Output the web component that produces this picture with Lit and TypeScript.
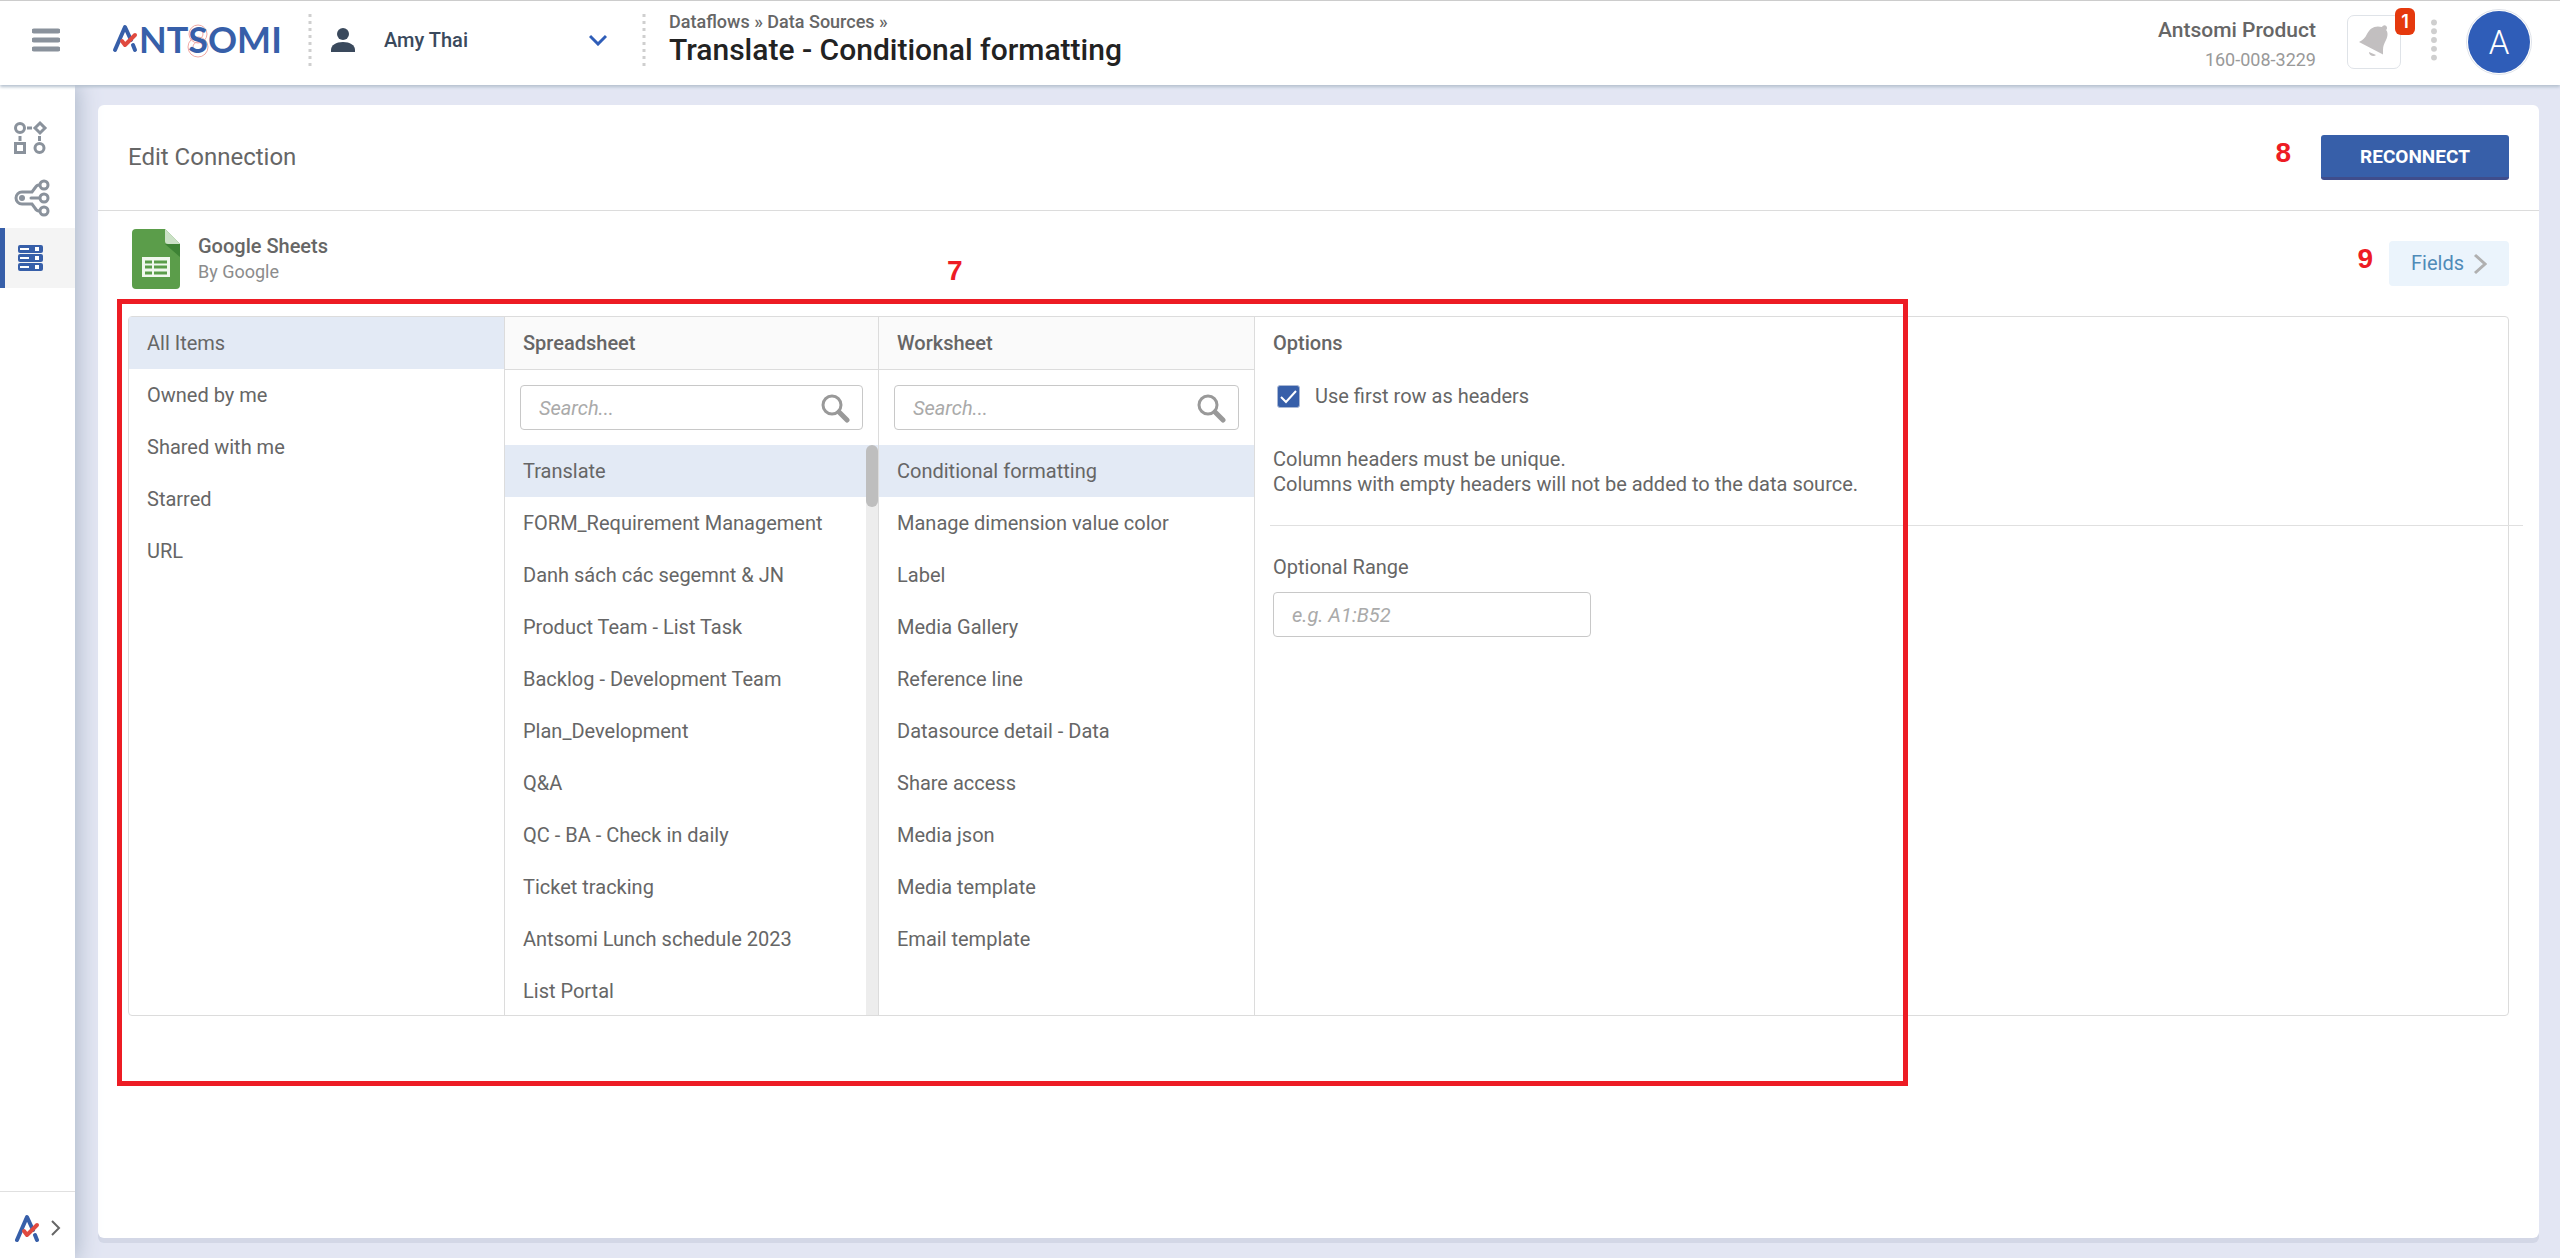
import { LitElement, html, svg, css } from "lit";
import { customElement, state } from "lit/decorators.js";
import { classMap } from "lit/directives/class-map.js";

const SCOPES = ["All Items", "Owned by me", "Shared with me", "Starred", "URL"];

const SPREADSHEETS = [
  "Translate",
  "FORM_Requirement Management",
  "Danh sách các segemnt & JN",
  "Product Team - List Task",
  "Backlog - Development Team",
  "Plan_Development",
  "Q&A",
  "QC - BA - Check in daily",
  "Ticket tracking",
  "Antsomi Lunch schedule 2023",
  "List Portal",
];

const WORKSHEETS = [
  "Conditional formatting",
  "Manage dimension value color",
  "Label",
  "Media Gallery",
  "Reference line",
  "Datasource detail - Data",
  "Share access",
  "Media json",
  "Media template",
  "Email template",
];

const base = css`
  * {
    box-sizing: border-box;
  }
  button,
  input {
    font: inherit;
    color: inherit;
    margin: 0;
  }
  button {
    border: 0;
    padding: 0;
    background: none;
    cursor: pointer;
  }
  a {
    color: inherit;
    text-decoration: none;
  }
  svg {
    display: block;
    flex: none;
  }
  ul {
    list-style: none;
    margin: 0;
    padding: 0;
  }
`;

/* Antsomi mark: blue A with a red tick for its crossbar. */
const mark = svg`
  <g fill="none" stroke-width="4" stroke-linecap="round" stroke-linejoin="round">
    <path stroke="#375fa9" d="M2 26 12 3 18 16M20 21l2 5" />
    <path stroke="#e04a3f" d="M9 17l3 4L22 11" />
  </g>`;

@customElement("app-header")
class AppHeader extends LitElement {
  static styles = [
    base,
    css`
      :host {
        display: flex;
        align-items: stretch;
        height: 85px;
        border-top: 1px solid #cccccc;
        background: #ffffff;
        box-shadow: 0 2px 3px #b4c0ce;
        position: relative;
        z-index: 2;
      }
      .menu {
        width: 92px;
        padding-left: 32px;
        padding-bottom: 6px;
      }
      .logo {
        display: flex;
        align-items: center;
        padding: 0 18px 4px 20px;
      }
      .dots {
        width: 5px;
        height: 56px;
        margin-top: 12px;
        flex: none;
      }
      .account {
        display: flex;
        align-items: center;
        width: 329px;
        padding: 0 35px 6px 17px;
        font-size: 20px;
        font-weight: 500;
        color: #3a495c;
      }
      .account .name {
        flex: 1;
        text-align: left;
        padding-left: 28px;
      }
      .heading {
        flex: 1;
        padding: 10px 0 0 22px;
      }
      .crumbs {
        font-size: 18px;
        line-height: 22px;
        font-weight: 500;
        color: #666666;
      }
      h1 {
        margin: 0;
        font-size: 30px;
        line-height: 34px;
        font-weight: 500;
        color: #222222;
      }
      .portal {
        text-align: right;
        padding: 16px 31px 0 0;
      }
      .portal .title {
        font-size: 21px;
        line-height: 26px;
        font-weight: 500;
        color: #666666;
      }
      .portal .id {
        font-size: 18px;
        line-height: 34px;
        color: #999999;
      }
      .bell {
        position: relative;
        width: 54px;
        height: 54px;
        margin-top: 14px;
        border: 1px solid #dfe3e8;
        border-radius: 7px;
      }
      .badge {
        position: absolute;
        top: -8px;
        right: -15px;
        width: 20px;
        height: 27px;
        border-radius: 6px;
        background: #e5390d;
        color: #ffffff;
        font: 600 18px/27px Inter, sans-serif;
        text-align: center;
      }
      .more {
        padding: 0 0 2px 30px;
      }
      .avatar {
        width: 66px;
        height: 66px;
        margin: 8px 28px 0 29px;
        border: 1px solid #dfe3ea;
        border-radius: 50%;
        background: #2f5db8;
        background-clip: content-box;
        padding: 1px;
        font-size: 33px;
        font-weight: 300;
        color: #ffffff;
      }
    `,
  ];

  private separator() {
    return html`<svg class="dots" viewBox="0 0 5 56" aria-hidden="true">
      <path d="M2 1v56" stroke="#cfcfcf" stroke-width="3" stroke-dasharray="3 4" fill="none" />
    </svg>`;
  }

  render() {
    return html`
      <button class="menu" aria-label="Menu">
        <svg width="28" height="24" viewBox="0 0 28 24">
          <path d="M2 3h24M2 12h24M2 21h24" stroke="#8a929c" stroke-width="5" stroke-linecap="round" />
        </svg>
      </button>
      <a class="logo" href="#">
        <svg width="178" height="48" viewBox="0 -4 178 48">
          <g transform="translate(1 3)">${mark}</g>
          <g fill="none" stroke="#f0aaa5" stroke-width="1">
            <circle cx="86" cy="13" r="9" />
            <circle cx="86" cy="26" r="10" />
            <circle cx="86" cy="13" r="5" />
            <circle cx="86" cy="26" r="5" />
          </g>
          <text x="27" y="32" font-family="Lato, sans-serif" font-size="36" font-weight="700" fill="#375fa9">NTSOMI</text>
        </svg>
      </a>
      ${this.separator()}
      <button class="account">
        <svg width="26" height="26" viewBox="0 0 26 26" fill="#3a495c">
          <ellipse cx="13" cy="7" rx="6" ry="6" />
          <path d="M1 25v-2c0-5 5-8 12-8s12 3 12 8v2z" />
        </svg>
        <span class="name">Amy Thai</span>
        <svg width="18" height="12" viewBox="0 0 18 12">
          <path d="M1 2l8 8 8-8" fill="none" stroke="#2f5db8" stroke-width="3" />
        </svg>
      </button>
      ${this.separator()}
      <div class="heading">
        <nav class="crumbs"><a href="#">Dataflows</a> » <a href="#">Data Sources</a> »</nav>
        <h1>Translate - Conditional formatting</h1>
      </div>
      <div class="portal">
        <div class="title">Antsomi Product</div>
        <div class="id">160-008-3229</div>
      </div>
      <button class="bell" aria-label="Notifications">
        <svg width="52" height="52" viewBox="0 0 52 52" fill="#c2bfc0">
          <path d="M11 26c4-2 6-4 8-8 3-6 8-9 15-7a2.600 2.600 0 1 1 4 3c2 2 2 6 0 10-2 4-3 6-3 10 0 2 0 3 0 4.500z" />
          <path d="M21 36l7 3c-2 2-7 1-7-3z" />
        </svg>
        <span class="badge">1</span>
      </button>
      <svg class="more" width="36" height="84" viewBox="0 0 6 84" fill="#cfcfcf" aria-hidden="true">
        ${[22, 31, 40, 49, 58].map((y) => svg`<circle cx="3" cy=${y} r="3" />`)}
      </svg>
      <button class="avatar">A</button>
    `;
  }
}

@customElement("app-sidebar")
class AppSidebar extends LitElement {
  static styles = [
    base,
    css`
      :host {
        display: flex;
        flex-direction: column;
        justify-content: space-between;
        width: 75px;
        background: #ffffff;
        box-shadow: 0 0 22px 2px #a9b5c6;
        position: relative;
        z-index: 1;
      }
      nav {
        display: flex;
        flex-direction: column;
        padding-top: 23px;
      }
      .item {
        display: flex;
        align-items: center;
        height: 60px;
        padding-left: 13px;
      }
      .active {
        border-left: 5px solid #375fa9;
        background: #f4f4f4;
      }
      .expand {
        display: flex;
        align-items: center;
        justify-content: space-between;
        height: 67px;
        padding: 6px 14px 0 15px;
        border-top: 1px solid #e0e0e0;
      }
    `,
  ];

  render() {
    return html`
      <nav>
        <a class="item" href="#" aria-label="Journeys">
          <svg width="36" height="36" viewBox="13 120 36 36" fill="none" stroke="#8a929c" stroke-width="3">
            <circle cx="20" cy="128" r="4.500" />
            <path d="M40 123l5 5-5 5-5-5z" />
            <path d="M15.500 143.500h9v9h-9z" />
            <circle cx="39.500" cy="148" r="4.500" />
            <path d="M27 128h5M20 136v5M39.500 136v5" />
          </svg>
        </a>
        <a class="item" href="#" aria-label="Integrations">
          <svg width="38" height="38" viewBox="12 179 38 38" fill="none" stroke="#8a929c" stroke-width="3">
            <path d="M38 185c-2 0-3 1-4 3l-3 4H21a6 6 0 0 0 0 12h10l3 4c1 2 2 3 4 3" />
            <path d="M30 198h8" stroke-linecap="round" />
            <circle cx="43" cy="185" r="4" />
            <circle cx="43" cy="198" r="4" />
            <circle cx="43" cy="211" r="4" />
            <circle cx="21" cy="198" r="3" fill="#8a929c" stroke="none" />
          </svg>
        </a>
        <a class="item active" href="#" aria-label="Data sources">
          <svg width="25" height="28" viewBox="0 0 25 28">
            ${[1, 10, 19].map(
              (y) => svg`
                <rect x="0" y=${y} width="25" height="8" rx="2" fill="#375fa9" />
                <path d=${`M2 ${y + 4}h9`} stroke="#fff" stroke-width="2" />
                <rect x="17" y=${y + 2} width="4" height="4" fill="#fff" />`
            )}
          </svg>
        </a>
      </nav>
      <button class="expand" aria-label="Expand">
        <svg width="25" height="28" viewBox="0 0 25 28">${mark}</svg>
        <svg width="10" height="16" viewBox="0 0 10 16">
          <path d="M1 1l7 7-7 7" fill="none" stroke="#666666" stroke-width="2" />
        </svg>
      </button>
    `;
  }
}

@customElement("item-list")
class ItemList extends LitElement {
  static properties = {
    items: { attribute: false },
    selected: { type: Number },
  };
  declare items: string[];
  declare selected: number;

  static styles = [
    base,
    css`
      :host {
        display: block;
        flex: 1;
        min-width: 0;
      }
      .item {
        width: 100%;
        height: 52px;
        padding: 0 18px;
        text-align: left;
      }
      .selected {
        background: #e3eaf5;
      }
    `,
  ];

  constructor() {
    super();
    this.items = [];
    this.selected = 0;
  }

  render() {
    return html`<ul>
      ${this.items.map(
        (item, i) => html`<li>
          <button
            class=${classMap({ item: true, selected: i === this.selected })}
            @click=${() => (this.selected = i)}
          >${item}</button>
        </li>`
      )}
    </ul>`;
  }
}

@customElement("search-box")
class SearchBox extends LitElement {
  static properties = { label: { type: String } };
  declare label: string;

  static styles = [
    base,
    css`
      :host {
        display: flex;
        align-items: center;
        height: 45px;
        margin: 15px;
        padding: 0 12px 0 0;
        border: 1px solid #c8c8c8;
        border-radius: 4px;
      }
      input {
        flex: 1;
        min-width: 0;
        height: 100%;
        padding: 0 18px;
        border: 0;
        outline: 0;
        background: none;
      }
      input::placeholder {
        font-style: italic;
        color: #aaaaaa;
      }
    `,
  ];

  render() {
    return html`
      <input type="text" placeholder="Search..." aria-label=${this.label} />
      <svg width="30" height="30" viewBox="0 0 30 30" fill="none" stroke="#999999">
        <circle cx="12" cy="12" r="9" stroke-width="3" />
        <path d="M19 19l8 8" stroke-width="5" stroke-linecap="round" />
      </svg>
    `;
  }
}

@customElement("app-root")
class AppRoot extends LitElement {
  @state() private firstRowHeaders = true;

  static styles = [
    base,
    css`
      :host {
        display: flex;
        flex-direction: column;
        min-height: 100vh;
        background: #e3e6f3;
        font-family: Roboto, "Liberation Sans", sans-serif;
        font-size: 20px;
        line-height: 25px;
        color: #666666;
      }
      .body {
        flex: 1;
        display: flex;
      }
      .card {
        flex: 1;
        min-width: 0;
        margin: 20px 21px 20px 23px;
        border-radius: 6px;
        background: #ffffff;
        box-shadow: 0 5px 0 #d3d7e6;
      }
      .card-head {
        display: flex;
        align-items: center;
        justify-content: space-between;
        height: 106px;
        padding: 0 30px;
        border-bottom: 1px solid #dcdcdc;
      }
      h2 {
        margin: 0;
        font-size: 24px;
        font-weight: 400;
      }
      .action {
        position: relative;
      }
      .reconnect {
        width: 188px;
        height: 45px;
        border-radius: 3px;
        border-bottom: 3px solid #3f4d8c;
        background: #375fa9;
        color: #ffffff;
        font-size: 19px;
        font-weight: 700;
      }
      .content {
        position: relative;
        padding: 0 30px;
      }
      .source {
        display: flex;
        align-items: center;
        justify-content: space-between;
        height: 105px;
        padding-left: 4px;
      }
      .connector {
        display: flex;
        align-items: center;
        gap: 18px;
        padding-bottom: 10px;
      }
      .connector strong {
        display: block;
        font-weight: 500;
      }
      .connector span {
        font-size: 18px;
        color: #8c8c8c;
      }
      .fields {
        display: flex;
        align-items: center;
        justify-content: space-between;
        width: 120px;
        height: 45px;
        padding: 0 22px;
        border-radius: 4px;
        background: #ebf4fc;
        color: #4f8bb8;
      }
      .panel {
        display: grid;
        grid-template-columns: 376fr 374fr 376fr 1253fr;
        border: 1px solid #dcdcdc;
        border-radius: 4px;
      }
      .column {
        min-width: 0;
        border-right: 1px solid #dcdcdc;
      }
      .column-head {
        height: 53px;
        padding: 0 18px;
        border-bottom: 1px solid #dcdcdc;
        background: #fafafa;
        line-height: 52px;
        font-weight: 500;
      }
      h3 {
        margin: 0;
        font-size: 20px;
      }
      .scroller {
        display: flex;
        max-height: 570px;
        overflow: hidden;
      }
      .track {
        width: 12px;
        background: linear-gradient(#e3eaf5 52px, #ededed 52px);
      }
      .thumb {
        height: 62px;
        border-radius: 6px;
        background: #bebebe;
      }
      .options {
        padding-left: 18px;
      }
      .options h3 {
        line-height: 52px;
        font-weight: 500;
      }
      .check {
        display: grid;
        grid-template-columns: 23px auto;
        justify-content: start;
        align-items: center;
        column-gap: 15px;
        padding: 15px 0 0 4px;
      }
      .check input {
        grid-area: 1 / 1;
        appearance: none;
        width: 23px;
        height: 23px;
        border-radius: 3px;
        border: 1px solid #aab8d4;
      }
      .check input:checked {
        background: #375fa9;
      }
      .check svg {
        grid-area: 1 / 1;
        z-index: 1;
        pointer-events: none;
      }
      .note {
        margin: 38px 0 28px;
      }
      hr {
        margin: 0 -15px 0 -3px;
        border: 0;
        border-top: 1px solid #e0e0e0;
      }
      .range {
        display: flex;
        flex-direction: column;
        align-items: flex-start;
        gap: 12px;
        padding-top: 29px;
      }
      .range input {
        width: 318px;
        height: 45px;
        padding: 0 18px;
        border: 1px solid #c8c8c8;
        border-radius: 4px;
        outline: 0;
        background: none;
      }
      .range input::placeholder {
        font-style: italic;
        color: #aaaaaa;
      }
      .callout {
        position: absolute;
        font: 700 28px/32px "Liberation Sans", sans-serif;
        color: #ed1c24;
      }
      .callout-box {
        position: absolute;
        top: 88px;
        left: 19px;
        width: 1791px;
        height: 787px;
        border: 5px solid #ed1c24;
        pointer-events: none;
      }
      .c7 {
        top: 44px;
        left: 849px;
      }
      .c8 {
        top: 2px;
        right: 218px;
      }
      .c9 {
        top: 2px;
        right: 136px;
      }
    `,
  ];

  render() {
    return html`
      <app-header></app-header>
      <div class="body">
        <app-sidebar></app-sidebar>
        <main class="card">
          <div class="card-head">
            <h2>Edit Connection</h2>
            <div class="action">
              <span class="callout c8">8</span>
              <button class="reconnect">RECONNECT</button>
            </div>
          </div>
          <div class="content">
            <div class="source">
              <div class="connector">
                <svg width="48" height="60" viewBox="0 0 48 60">
                  <path d="M4 0h29l15 15v41a4 4 0 0 1-4 4H4a4 4 0 0 1-4-4V4a4 4 0 0 1 4-4z" fill="#5b9d4a" />
                  <path d="M33 15h15v13z" fill="#3e8335" />
                  <path d="M33 0l15 15H36a3 3 0 0 1-3-3z" fill="#cbe1c6" />
                  <path d="M10 28h28v20H10z" fill="#f1f8ee" />
                  <path d="M13 33h7M13 38h7M13 44h7M22 33h13M22 38h13M22 44h13" stroke="#5b9d4a" stroke-width="3" />
                </svg>
                <div>
                  <strong>Google Sheets</strong>
                  <span>By Google</span>
                </div>
              </div>
              <div class="action">
                <span class="callout c9">9</span>
                <button class="fields">
                  Fields
                  <svg width="14" height="22" viewBox="0 0 14 22">
                    <path d="M2 2l10 9-10 9" fill="none" stroke="#b0b0b0" stroke-width="3" />
                  </svg>
                </button>
              </div>
            </div>
            <section class="panel">
              <div class="column">
                <item-list .items=${SCOPES}></item-list>
              </div>
              <div class="column">
                <h3 class="column-head">Spreadsheet</h3>
                <search-box label="Search spreadsheets"></search-box>
                <div class="scroller">
                  <item-list .items=${SPREADSHEETS}></item-list>
                  <div class="track"><div class="thumb"></div></div>
                </div>
              </div>
              <div class="column">
                <h3 class="column-head">Worksheet</h3>
                <search-box label="Search worksheets"></search-box>
                <item-list .items=${WORKSHEETS}></item-list>
              </div>
              <div class="options">
                <h3>Options</h3>
                <label class="check">
                  <input
                    type="checkbox"
                    .checked=${this.firstRowHeaders}
                    @change=${(e: Event) => (this.firstRowHeaders = (e.target as HTMLInputElement).checked)}
                  />
                  <svg width="23" height="23" viewBox="0 0 23 23">
                    <path d="M4 12l5 5L19 6" fill="none" stroke="#fff" stroke-width="2" />
                  </svg>
                  <span>Use first row as headers</span>
                </label>
                <p class="note">
                  Column headers must be unique.<br />Columns with empty headers will not be added to the data source.
                </p>
                <hr />
                <div class="range">
                  <label for="range">Optional Range</label>
                  <input id="range" type="text" placeholder="e.g. A1:B52" />
                </div>
              </div>
            </section>
            <div class="callout-box"></div>
            <span class="callout c7">7</span>
          </div>
        </main>
      </div>
    `;
  }
}
